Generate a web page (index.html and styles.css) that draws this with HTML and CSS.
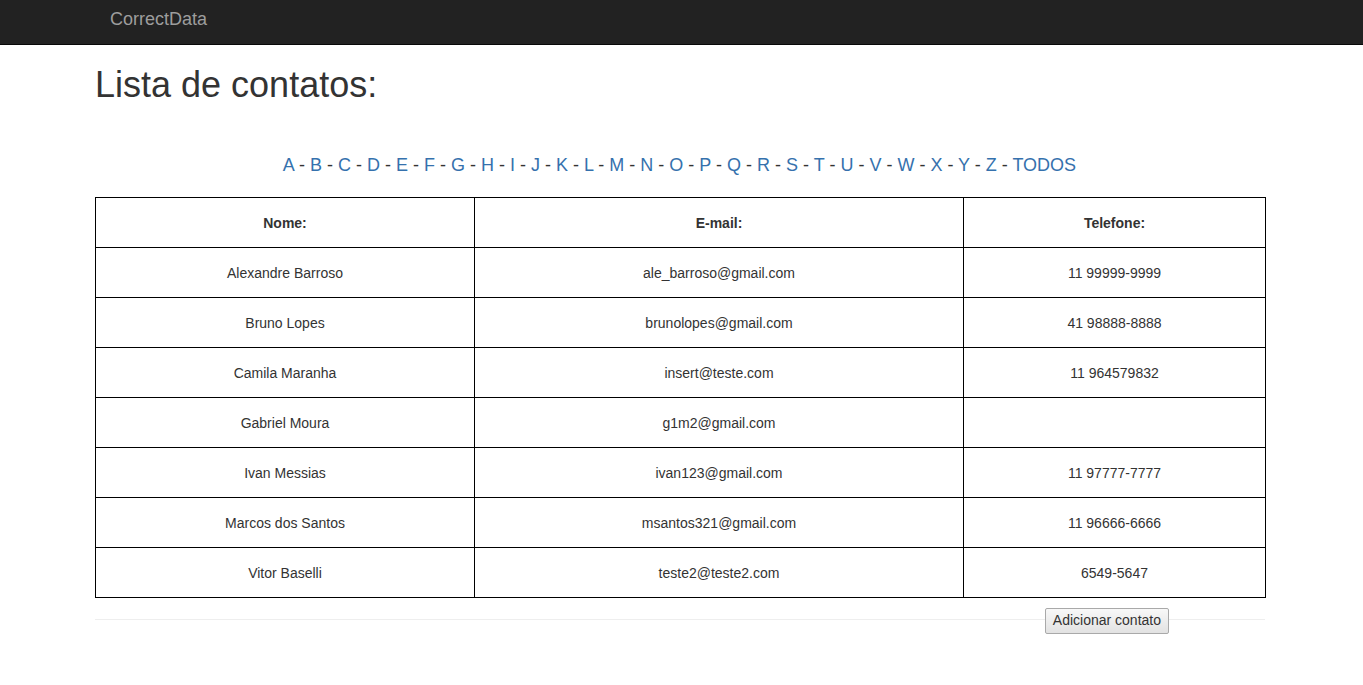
FILE: index.html
```html
<!DOCTYPE html>
<html lang="pt-BR">
<head>
<meta charset="utf-8">
<title>Lista de contatos</title>
<link rel="stylesheet" href="styles.css">
</head>
<body>
<nav class="navbar">
  <div class="container">
    <a class="brand" href="#">CorrectData</a>
  </div>
</nav>
<main class="container">
  <h1 class="title">Lista de contatos:</h1>
  <p class="alphabet">
    <a href="#">A</a> - <a href="#">B</a> - <a href="#">C</a> - <a href="#">D</a> - <a href="#">E</a> - <a href="#">F</a> - <a href="#">G</a> - <a href="#">H</a> - <a href="#">I</a> - <a href="#">J</a> - <a href="#">K</a> - <a href="#">L</a> - <a href="#">M</a> - <a href="#">N</a> - <a href="#">O</a> - <a href="#">P</a> - <a href="#">Q</a> - <a href="#">R</a> - <a href="#">S</a> - <a href="#">T</a> - <a href="#">U</a> - <a href="#">V</a> - <a href="#">W</a> - <a href="#">X</a> - <a href="#">Y</a> - <a href="#">Z</a> - <a href="#">TODOS</a>
  </p>
  <table class="contacts">
    <colgroup>
      <col class="c-name">
      <col class="c-mail">
      <col class="c-phone">
    </colgroup>
    <thead>
      <tr><th>Nome:</th><th>E-mail:</th><th>Telefone:</th></tr>
    </thead>
    <tbody>
      <tr><td>Alexandre Barroso</td><td>ale_barroso@gmail.com</td><td>11 99999-9999</td></tr>
      <tr><td>Bruno Lopes</td><td>brunolopes@gmail.com</td><td>41 98888-8888</td></tr>
      <tr><td>Camila Maranha</td><td>insert@teste.com</td><td>11 964579832</td></tr>
      <tr><td>Gabriel Moura</td><td>g1m2@gmail.com</td><td></td></tr>
      <tr><td>Ivan Messias</td><td>ivan123@gmail.com</td><td>11 97777-7777</td></tr>
      <tr><td>Marcos dos Santos</td><td>msantos321@gmail.com</td><td>11 96666-6666</td></tr>
      <tr><td>Vitor Baselli</td><td>teste2@teste2.com</td><td>6549-5647</td></tr>
    </tbody>
  </table>
  <div class="actions">
    <button class="btn" type="button">Adicionar contato</button>
  </div>
</main>
</body>
</html>
```
FILE: styles.css
```css
* { box-sizing: border-box; }
html, body { margin: 0; padding: 0; }
body {
  font-family: "Liberation Sans", Arial, Helvetica, sans-serif;
  font-size: 14px;
  line-height: 1.42857;
  color: #333;
  background: #fff;
}
.container {
  width: 1173px;
  margin: 0 auto;
}
.navbar {
  height: 45px;
  background: #222;
  border-bottom: 1px solid #080808;
}
.brand {
  display: inline-block;
  padding: 9px 15px 0;
  font-size: 18px;
  line-height: 20px;
  color: #9d9d9d;
  text-decoration: none;
}
.title {
  margin: 20px 0 0;
  font-size: 36px;
  font-weight: 500;
  line-height: 40px;
  color: #333;
}
.alphabet {
  margin: 47px 0 0;
  padding-right: 4px;
  text-align: center;
  font-size: 18px;
  line-height: 26px;
  color: #333;
}
.alphabet a {
  color: #3571ad;
  text-decoration: none;
}
.contacts {
  margin-top: 19px;
  width: 1170px;
  border-collapse: collapse;
  table-layout: fixed;
  border: 1px solid #000;
}
.c-name { width: 379px; }
.c-mail { width: 489px; }
.c-phone { width: 302px; }
.contacts th, .contacts td {
  border: 1px solid #000;
  height: 50px;
  padding: 0 8px;
  text-align: center;
  vertical-align: middle;
  line-height: 20px;
  font-size: 14px;
}
.contacts th { font-weight: 700; }
.actions {
  display: flex;
  justify-content: flex-end;
  width: 1170px;
  margin-top: 10px;
  padding-right: 96px;
  background: linear-gradient(#eee, #eee) no-repeat 0 11px / 100% 1px;
}
.btn {
  font-family: "Liberation Sans", Arial, Helvetica, sans-serif;
  font-size: 14px;
  line-height: 21px;
  color: #333;
  padding: 1px 7px 2px;
  border: 1px solid #a9a9a9;
  border-radius: 2px;
  background: linear-gradient(#f8f8f8, #e2e2e2);
}
```
